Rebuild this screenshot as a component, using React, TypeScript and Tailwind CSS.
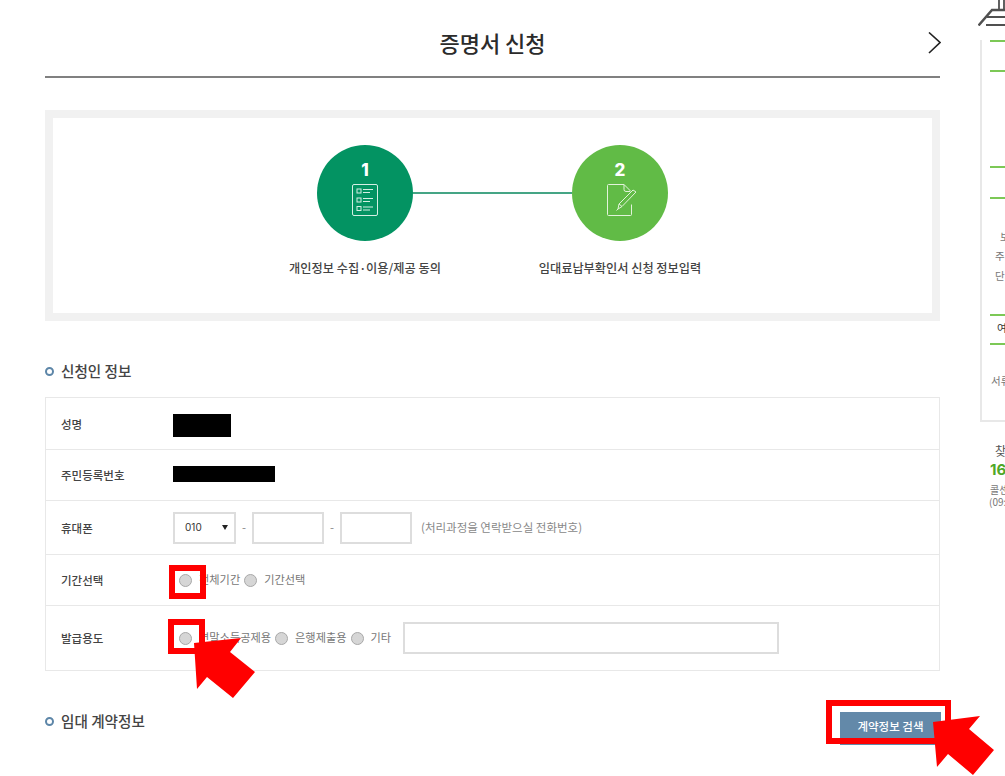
import React from "react";

const font = { fontFamily: '"Noto Sans CJK KR", "Noto Sans", sans-serif' };

function Radio({ label, gap = "mr-[4px]" }: { label: string; gap?: string }) {
  return (
    <label className={`flex items-center ${gap}`}>
      <input type="radio" className="appearance-none w-[13px] h-[13px] rounded-full border border-[#a8a8a8] bg-[#d6d6d6] mr-[7px] shrink-0" />
      <span className="text-[11.2px] leading-none text-[#777] whitespace-nowrap">{label}</span>
    </label>
  );
}

function Row({ label, h, children, last }: { label: string; h: string; children?: React.ReactNode; last?: boolean }) {
  return (
    <div className={`flex items-center ${h} ${last ? "" : "border-b border-[#e8e8e8]"}`}>
      <div className="w-[127px] pl-[15px] pt-[2px] shrink-0 text-[11.5px] font-medium text-[#444] whitespace-nowrap">{label}</div>
      {children}
    </div>
  );
}

function SectionTitle({ children }: { children: React.ReactNode }) {
  return (
    <div className="flex items-center">
      <span className="w-[9px] h-[9px] rounded-full border-[2.5px] border-[#5d86a8] mr-[7px]" />
      <span className="text-[14.6px] font-medium text-[#444] leading-none">{children}</span>
    </div>
  );
}

function Step({ n, bg, label, icon }: { n: string; bg: string; label: string; icon: React.ReactNode }) {
  return (
    <div className="relative w-[96px] flex flex-col items-center">
      <div className={`w-[96px] h-[96px] rounded-full ${bg} flex flex-col items-center pt-[15px] text-white`}>
        <span className="text-[17px] font-extrabold leading-[20px]" style={{ fontFamily: "Inter, sans-serif" }}>{n}</span>
        <div className="mt-[4px]">{icon}</div>
      </div>
      <div className="mt-[18px] text-[12.2px] font-medium text-[#444] whitespace-nowrap leading-[18px]">{label}</div>
    </div>
  );
}

const GreenLine = ({ mt }: { mt: string }) => <div className={`${mt} ml-[8px] h-[2px] bg-[#7cc856]`} />;

export default function App() {
  return (
    <div className="relative w-[1005px] h-[776px] overflow-hidden bg-white flex" style={font}>
      <div className="ml-[45px] w-[895px] shrink-0">
        <header className="relative h-[78px] border-b-2 border-[#808080] flex items-center justify-center pt-[7px]">
          <h1 className="text-[22px] font-medium text-[#2b2b2b] leading-none">증명서 신청</h1>
          <svg className="absolute right-[-1px] top-[32px]" width="13" height="22" viewBox="0 0 13 22" fill="none">
            <path d="M1 0.5 L12 10.5 L1 21" stroke="#222" strokeWidth="1.6" />
          </svg>
        </header>

        <section className="mt-[32px] h-[211px] border-[8px] border-[#f1f1f1] flex justify-center pt-[27px]">
          <div className="flex items-start">
            <Step
              n="1"
              bg="bg-[#039362]"
              label="개인정보 수집·이용/제공 동의"
              icon={
                <svg width="26" height="32" viewBox="0 0 26 32" fill="none" stroke="#d5efe4" strokeWidth="1">
                  <rect x="0.5" y="0.5" width="25" height="31" rx="1.5" />
                  <rect x="5" y="5" width="4" height="4" />
                  <rect x="5" y="14" width="4" height="4" />
                  <rect x="5" y="22.5" width="4" height="4" />
                  <path d="M11 5.5H21M11 8.5H18M11 14.5H21M11 17.5H18M11 23H21M11 26H18" />
                </svg>
              }
            />
            <div className="w-[159px] h-[2px] mt-[47px] bg-[#45a585]" />
            <Step
              n="2"
              bg="bg-[#61bb46]"
              label="임대료납부확인서 신청 정보입력"
              icon={
                <svg className="ml-[4px]" width="30" height="32" viewBox="0 0 30 32" fill="none" stroke="#e2f3da" strokeWidth="1">
                  <path d="M17 0.5H1.5a1 1 0 0 0-1 1v29a1 1 0 0 0 1 1h22a1 1 0 0 0 1-1v-10" />
                  <path d="M17 0.5v5a2 2 0 0 0 2 2h4M17 0.5l7 7" />
                  <path d="M11 25 L12 20 L26 6 L29 8 L15 22.5 Z M12 20 L15 22.5" />
                  <path d="M11 25 L9.5 26.5" />
                </svg>
              }
            />
          </div>
        </section>

        <div className="mt-[43px] h-[15px]">
          <SectionTitle>신청인 정보</SectionTitle>
        </div>

        <div className="mt-[18px] border border-[#e8e8e8] text-[#444]">
          <Row label="성명" h="h-[52px]">
            <div className="w-[58px] h-[23px] bg-black mt-[4px]" />
          </Row>
          <Row label="주민등록번호" h="h-[51px]">
            <div className="w-[102px] h-[16px] bg-black -mt-[3px]" />
          </Row>
          <Row label="휴대폰" h="h-[54px]">
            <div className="flex items-center text-[#888] text-[11.5px]">
              <div className="w-[63px] h-[32px] border-2 border-[#dddddd] flex items-center justify-between pl-[10px] pr-[6px] text-[#333]" style={{ fontFamily: "Inter, sans-serif" }}>
                <span className="text-[10px]">010</span>
                <span className="w-0 h-0 border-l-[3px] border-r-[3px] border-t-[5px] border-l-transparent border-r-transparent border-t-[#222]" />
              </div>
              <span className="w-[16px] text-center">-</span>
              <input className="w-[72px] h-[32px] border-2 border-[#dddddd]" />
              <span className="w-[16px] text-center">-</span>
              <input className="w-[72px] h-[32px] border-2 border-[#dddddd]" />
              <span className="ml-[9px] whitespace-nowrap">(처리과정을 연락받으실 전화번호)</span>
            </div>
          </Row>
          <Row label="기간선택" h="h-[51px]">
            <div className="flex items-center pl-[6px]">
              <Radio label="전체기간" />
              <Radio label="기간선택" />
            </div>
          </Row>
          <Row label="발급용도" h="h-[64px]" last>
            <div className="flex items-center pl-[6px]">
              <Radio label="연말소득공제용" />
              <Radio label="은행제출용" />
              <Radio label="기타" gap="mr-[12px]" />
              <input className="w-[376px] h-[32px] border-2 border-[#dddddd]" />
            </div>
          </Row>
        </div>

        <div className="mt-[41px] flex items-start justify-between">
          <div className="mt-[2px]">
            <SectionTitle>임대 계약정보</SectionTitle>
          </div>
          <button className="w-[101px] h-[33px] mr-[-1px] bg-[#6389a9] text-white text-[11.5px] font-medium flex items-center justify-center pb-[4px]">
            계약정보 검색
          </button>
        </div>
      </div>

      <aside className="ml-[38px] flex-1 min-w-0 overflow-hidden text-[#777] text-[10.5px] leading-none">
        <svg className="block" width="27" height="26" viewBox="0 0 27 26" fill="none" stroke="#505050" strokeWidth="2">
          <path d="M0.5 25.5 L14 10 H27" strokeWidth="2.5" />
          <path d="M9 17 H27 M8 25 H27 M21 0 V10 M26 0 V10" strokeWidth="1.8" />
        </svg>
        <div className="ml-[2px] h-[382px] border-l-2 border-b-2 border-[#e8e8e8]">
          <GreenLine mt="mt-[14px]" />
          <GreenLine mt="mt-[28px]" />
          <GreenLine mt="mt-[94px]" />
          <GreenLine mt="mt-[29px]" />
          <div className="mt-[33px] pl-[18px] whitespace-nowrap">보증금</div>
          <div className="mt-[8px] pl-[13px] whitespace-nowrap">주택유형</div>
          <div className="mt-[10px] pl-[13px] whitespace-nowrap">단지명</div>
          <GreenLine mt="mt-[32px]" />
          <div className="mt-[7px] pl-[15px] text-[#333] whitespace-nowrap">여부</div>
          <GreenLine mt="mt-[10px]" />
          <div className="mt-[31px] pl-[9px] whitespace-nowrap">서류제출</div>
        </div>
        <div className="mt-[23px] pl-[17px] text-[12px] text-[#555] whitespace-nowrap">찾아오시는 길</div>
        <div className="mt-[5px] pl-[12px] text-[15px] font-bold text-[#4fa829] whitespace-nowrap" style={{ fontFamily: "Inter, sans-serif" }}>1600-1004</div>
        <div className="mt-[8px] pl-[12px] text-[10px] whitespace-nowrap">콜센터</div>
        <div className="mt-[2px] pl-[11px] text-[10px] whitespace-nowrap">(09:00~18:00)</div>
      </aside>

      {/* Red annotations drawn over the screenshot */}
      <div className="absolute left-[169px] top-[565px] w-[37px] h-[34px] border-[6px] border-[#ff0000]" />
      <div className="absolute left-[168px] top-[619px] w-[37px] h-[35px] border-[6px] border-[#ff0000]" />
      <div className="absolute left-[826px] top-[700px] w-[125px] h-[44px] border-[6px] border-[#ff0000]" />
      <svg className="absolute left-0 top-0" width="1005" height="776" viewBox="0 0 1005 776" fill="#ff0000">
        <polygon points="194,643 241,638 230,652 255,672 233,698 207,677 197,689" />
        <polygon points="933,722 980,716 969,729 994,750 973,775 948,754 937,767" />
      </svg>
    </div>
  );
}
